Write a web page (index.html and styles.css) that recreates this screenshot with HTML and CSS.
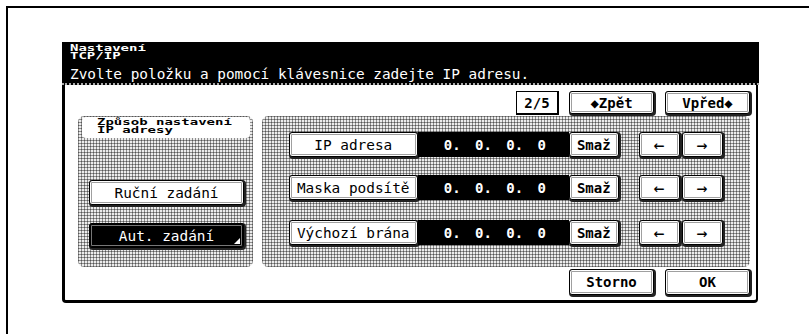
FILE: index.html
```html
<!DOCTYPE html>
<html lang="cs">
<head>
<meta charset="UTF-8">
<title>Nastavení TCP/IP</title>
<link rel="stylesheet" href="styles.css">
</head>
<body>
<div class="frame">
  <div class="screen">
    <div class="header">
      <div class="title"><div class="tiny">Nastavení</div><div class="tiny">TCP/IP</div></div>
      <div class="hint">Zvolte položku a pomocí klávesnice zadejte IP adresu.</div>
    </div>
    <div class="panel">
      <div class="topbar">
        <div class="page">2/5</div>
        <div class="btn nav">&#9670;Zpět</div>
        <div class="btn nav">Vpřed&#9670;</div>
      </div>
      <div class="groups">
        <div class="hatch left">
          <div class="caption"><div class="tiny">Způsob nastavení</div><div class="tiny">IP adresy</div></div>
          <div class="btn mode">Ruční zadání</div>
          <div class="btn mode active">Aut. zadání</div>
        </div>
        <div class="hatch right">
          <div class="row">
            <div class="btn label">IP adresa</div>
            <div class="value"><span>0.</span><span>0.</span><span>0.</span><span>0</span></div>
            <div class="btn clear">Smaž</div>
            <div class="btn arrow">&larr;</div>
            <div class="btn arrow">&rarr;</div>
          </div>
          <div class="row">
            <div class="btn label">Maska podsítě</div>
            <div class="value"><span>0.</span><span>0.</span><span>0.</span><span>0</span></div>
            <div class="btn clear">Smaž</div>
            <div class="btn arrow">&larr;</div>
            <div class="btn arrow">&rarr;</div>
          </div>
          <div class="row">
            <div class="btn label">Výchozí brána</div>
            <div class="value"><span>0.</span><span>0.</span><span>0.</span><span>0</span></div>
            <div class="btn clear">Smaž</div>
            <div class="btn arrow">&larr;</div>
            <div class="btn arrow">&rarr;</div>
          </div>
        </div>
      </div>
      <div class="bottombar">
        <div class="btn action">Storno</div>
        <div class="btn action">OK</div>
      </div>
    </div>
  </div>
</div>
</body>
</html>
```

FILE: styles.css
```css
body {
    margin: 0;
    background: #fff;
    font-family: "DejaVu Sans Mono", "Liberation Mono", monospace;
    color: #000;
}
.frame {
    margin: 6px 0 0 6px;
    height: 328px;
    border-left: 2px solid #000;
    border-top: 2px solid #000;
    padding: 34px 0 0 54px;
    box-sizing: border-box;
}
.screen {
    width: 697px;
}
.header {
    background: #000;
    color: #fff;
    height: 43px;
    padding: 3px 0 0 8px;
    box-sizing: border-box;
    border-bottom: 2px dotted #aaa;
}
/* squat pixel-font lines */
.tiny {
    height: 8px;
    font-size: 14px;
    font-weight: bold;
    line-height: 13px;
    transform: scaleY(0.56);
    transform-origin: top left;
    white-space: nowrap;
}
.title {
    height: 16px;
    margin-bottom: 5px;
}
.hint {
    font-size: 14.4px;
    line-height: 16px;
}
.panel {
    width: 696px;
    height: 218px;
    border-left: 3px solid #000;
    border-right: 2px solid #000;
    border-bottom: 3px solid #000;
    border-radius: 0 0 4px 4px;
    box-sizing: border-box;
    padding: 6px 6px 0 13px;
    background: #fff;
}
.topbar {
    display: flex;
    justify-content: flex-end;
    gap: 10px;
    height: 25px;
}
.page {
    width: 43px;
    height: 24px;
    border: 1px solid #000;
    border-right-width: 2px;
    border-bottom-width: 2px;
    box-sizing: border-box;
    display: flex;
    align-items: center;
    justify-content: center;
    font-weight: bold;
    font-size: 14px;
}
.btn {
    background: #fff;
    border: 1px solid #000;
    border-radius: 3px;
    box-shadow: inset 0 0 0 1px #fff, inset 0 0 0 2px #a0a0a0, 1px 1px 0 1px #222;
    box-sizing: border-box;
    display: flex;
    align-items: center;
    justify-content: center;
    font-size: 14.4px;
    white-space: nowrap;
}
.nav {
    width: 85px;
    height: 23px;
    font-weight: bold;
    font-size: 14px;
}
.nav:last-child {
    margin-left: 1px;
}
.groups {
    display: flex;
    gap: 9px;
}
.hatch {
    background-color: #ececec;
    background-image:
        repeating-linear-gradient(90deg, rgba(0,0,0,.4) 0 1px, transparent 1px 3px),
        repeating-linear-gradient(0deg, rgba(0,0,0,.4) 0 1px, transparent 1px 3px);
    border-radius: 6px;
    height: 151px;
    box-sizing: border-box;
}
.left {
    width: 175px;
    padding: 1px 3px 0 4px;
}
.caption {
    background: #fff;
    border-radius: 4px;
    height: 21px;
    padding: 2px 0 0 15px;
    box-sizing: border-box;
}
.mode {
    width: 155px;
    height: 25px;
    margin-left: 7px;
}
.caption + .mode {
    margin-top: 42px;
}
.active {
    margin-top: 18px;
    background: #000;
    color: #fff;
    position: relative;
    box-shadow: inset 0 0 0 1px #000, inset 0 0 0 2px #777, 1px 1px 0 1px #222;
}
.active::after {
    content: "";
    position: absolute;
    right: 3px;
    bottom: 3px;
    border-left: 6px solid transparent;
    border-bottom: 6px solid #fff;
}
.right {
    width: 489px;
    padding: 16px 0 0 27px;
    display: flex;
    flex-direction: column;
    gap: 18px;
}
.row {
    display: flex;
    height: 25px;
}
.row + .row + .row {
    margin-top: 2px;
}
.label {
    width: 129px;
    height: 25px;
}
.value {
    width: 151px;
    height: 25px;
    background: #000;
    color: #fff;
    font-weight: bold;
    font-size: 14px;
    display: flex;
    align-items: center;
    padding-left: 26px;
    box-sizing: border-box;
}
.value span {
    width: 35px;
}
.clear {
    width: 50px;
    height: 25px;
    font-weight: bold;
    font-size: 14px;
    margin-right: 20px;
}
.arrow {
    width: 41px;
    height: 25px;
    font-size: 18px;
    margin-right: 2px;
}
.bottombar {
    display: flex;
    justify-content: flex-end;
    gap: 11px;
    margin-top: 2px;
}
.action {
    width: 85px;
    height: 26px;
    font-weight: bold;
    font-size: 14px;
}
```
